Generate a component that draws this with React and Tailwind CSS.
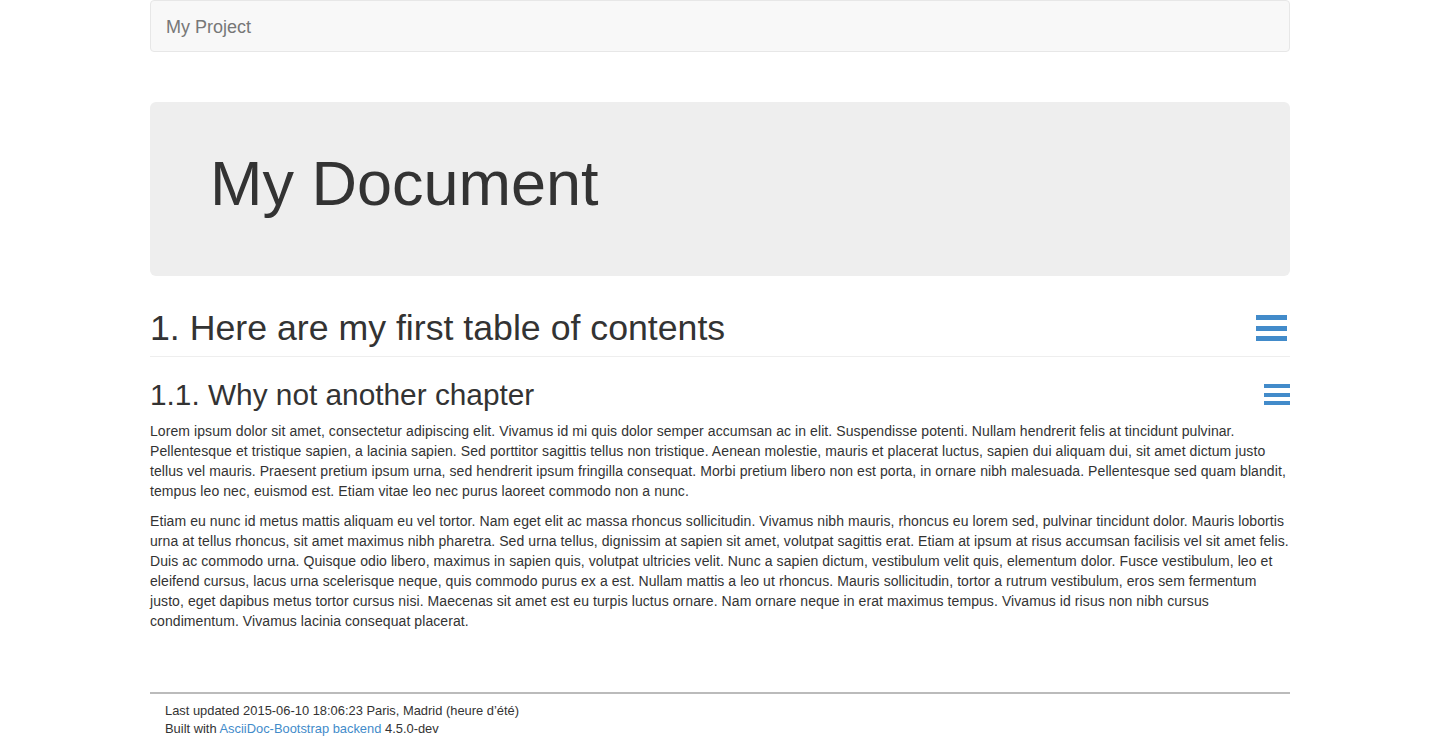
const MenuIcon = ({ big }) => (
  <div
    className={
      big
        ? 'flex flex-col justify-between w-[31px] h-[26px] mr-[3px]'
        : 'flex flex-col justify-between w-[26px] h-[21px]'
    }
  >
    <span className={big ? 'block h-[5px] bg-[#428bca]' : 'block h-[4px] bg-[#428bca]'} />
    <span className={big ? 'block h-[5px] bg-[#428bca]' : 'block h-[4px] bg-[#428bca]'} />
    <span className={big ? 'block h-[5px] bg-[#428bca]' : 'block h-[4px] bg-[#428bca]'} />
  </div>
);

const App = () => {
  return (
    <div className="min-h-screen bg-white text-[#333] font-['Liberation_Sans',Arial,sans-serif]">
      <div className="w-[1140px] mx-auto">
        {/* Navbar */}
        <nav className="h-[52px] bg-[#f8f8f8] border border-[#e7e7e7] rounded-[4px] flex items-center px-[15px] pt-[2px]">
          <span className="text-[18px] leading-[20px] text-[#777]">My Project</span>
        </nav>

        {/* Jumbotron */}
        <div className="mt-[50px] h-[174px] bg-[#eee] rounded-[6px] px-[60px] pt-[47px]">
          <h1 className="text-[63px] leading-[1.1]">My Document</h1>
        </div>

        {/* Section 1 */}
        <div className="mt-[32px] pb-[8px] border-b border-[#eee] flex items-center justify-between">
          <h1 className="text-[35.7px] leading-[40px]">1. Here are my first table of contents</h1>
          <MenuIcon big />
        </div>

        {/* Section 1.1 */}
        <div className="mt-[21px] flex items-center justify-between">
          <h2 className="text-[29.8px] leading-[33px]">1.1. Why not another chapter</h2>
          <MenuIcon />
        </div>

        <p className="mt-[10px] text-[14px] leading-[20px] tracking-[0.08px]">
          Lorem ipsum dolor sit amet, consectetur adipiscing elit. Vivamus id mi quis dolor semper accumsan ac in elit. Suspendisse potenti. Nullam hendrerit felis at tincidunt pulvinar. Pellentesque et tristique sapien, a lacinia sapien. Sed porttitor sagittis tellus non tristique. Aenean molestie, mauris et placerat luctus, sapien dui aliquam dui, sit amet dictum justo tellus vel mauris. Praesent pretium ipsum urna, sed hendrerit ipsum fringilla consequat. Morbi pretium libero non est porta, in ornare nibh malesuada. Pellentesque sed quam blandit, tempus leo nec, euismod est. Etiam vitae leo nec purus laoreet commodo non a nunc.
        </p>
        <p className="mt-[10px] text-[14px] leading-[20px] tracking-[0.08px]">
          Etiam eu nunc id metus mattis aliquam eu vel tortor. Nam eget elit ac massa rhoncus sollicitudin. Vivamus nibh mauris, rhoncus eu lorem sed, pulvinar tincidunt dolor. Mauris lobortis urna at tellus rhoncus, sit amet maximus nibh pharetra. Sed urna tellus, dignissim at sapien sit amet, volutpat sagittis erat. Etiam at ipsum at risus accumsan facilisis vel sit amet felis. Duis ac commodo urna. Quisque odio libero, maximus in sapien quis, volutpat ultricies velit. Nunc a sapien dictum, vestibulum velit quis, elementum dolor. Fusce vestibulum, leo et eleifend cursus, lacus urna scelerisque neque, quis commodo purus ex a est. Nullam mattis a leo ut rhoncus. Mauris sollicitudin, tortor a rutrum vestibulum, eros sem fermentum justo, eget dapibus metus tortor cursus nisi. Maecenas sit amet est eu turpis luctus ornare. Nam ornare neque in erat maximus tempus. Vivamus id risus non nibh cursus condimentum. Vivamus lacinia consequat placerat.
        </p>

        {/* Footer */}
        <footer className="mt-[61px] border-t-2 border-[#bbb] px-[15px] pt-[8px] text-[12.9px] leading-[18px]">
          <div>Last updated 2015-06-10 18:06:23 Paris, Madrid (heure d’été)</div>
          <div>
            Built with <a href="#" className="text-[#428bca]">AsciiDoc-Bootstrap backend</a> 4.5.0-dev
          </div>
        </footer>
      </div>
    </div>
  );
};

export default App;
